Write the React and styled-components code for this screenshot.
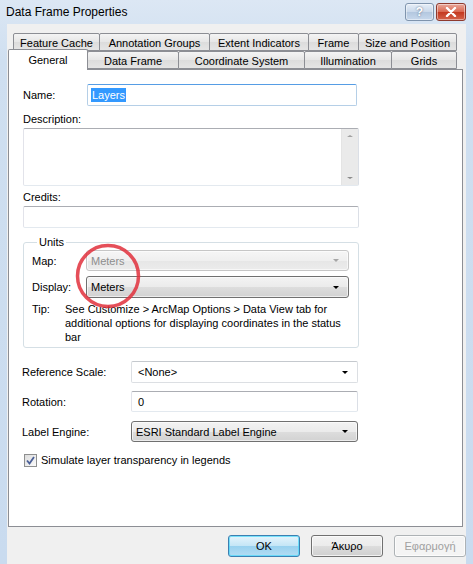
import React from 'react'
import styled, { createGlobalStyle } from 'styled-components'

const Global = createGlobalStyle`
  html, body { margin: 0; padding: 0; overflow: hidden; }
  body { font-family: "Liberation Sans", Arial, sans-serif; font-size: 11px; color: #000; }
`

const topTabs = [
  { label: 'Feature Cache', w: 87 },
  { label: 'Annotation Groups', w: 111 },
  { label: 'Extent Indicators', w: 100 },
  { label: 'Frame', w: 51 },
  { label: 'Size and Position', w: 99 },
]

const bottomTabs = [
  { label: 'General', w: 80, active: true },
  { label: 'Data Frame', w: 92 },
  { label: 'Coordinate System', w: 127 },
  { label: 'Illumination', w: 88 },
  { label: 'Grids', w: 66 },
]

const Window = styled.div`
  width: 473px;
  height: 564px;
  display: flex;
  flex-direction: column;
  background: linear-gradient(#dce7f4, #cfdff0 60px, #c9dbef);
`

const TitleBar = styled.div`
  height: 24px;
  flex: none;
  display: flex;
  align-items: center;
  justify-content: space-between;
  padding: 0 7px 0 6px;
  font-family: "Liberation Sans", Arial, sans-serif;
  font-size: 12px;
  color: #000;
`

const Caption = styled.span`
  margin-top: -1px;
`

const CaptionButtons = styled.div`
  display: flex;
  gap: 2px;
  align-self: flex-start;
  margin-top: 3px;
`

const CapBtn = styled.div`
  width: ${p => p.$w}px;
  height: 18px;
  box-sizing: border-box;
  border: 1px solid ${p => (p.$close ? '#8e3a2e' : '#7f94ad')};
  border-radius: 3px;
  display: flex;
  align-items: center;
  justify-content: center;
  color: #fff;
  font-weight: bold;
  font-size: 12px;
  text-shadow: 0 0 2px #50607a;
  background: ${p =>
    p.$close
      ? 'linear-gradient(#e9a99c, #d9664f 50%, #c4381f 51%, #d4634b)'
      : 'linear-gradient(#e6eef8, #c9d8ea 50%, #b3c7df 51%, #c7d8ec)'};
  box-shadow: inset 0 0 0 1px rgba(255,255,255,0.45);
`

const Body = styled.div`
  flex: 1;
  margin: 0 7px;
  background: #f0f0f0;
  padding-top: 9px;
  display: flex;
  flex-direction: column;
`

const TabRow = styled.div`
  display: flex;
  height: 18px;
  padding-left: ${p => p.$indent}px;
  position: relative;
  z-index: ${p => p.$z};
`

const Tab = styled.div`
  width: ${p => p.$w}px;
  box-sizing: border-box;
  height: ${p => (p.$active ? 21 : 18)}px;
  margin-top: ${p => (p.$active ? -2 : 0)}px;
  border: 1px solid #8c8e94;
  border-bottom: ${p => (p.$active ? 'none' : '1px solid #8c8e94')};
  margin-left: -1px;
  border-radius: 2px 2px 0 0;
  background: ${p => (p.$active ? '#fff' : 'linear-gradient(#f4f4f4, #e6e6e6 50%, #dcdcdc 51%, #e5e5e5)')};
  display: flex;
  align-items: center;
  justify-content: center;
  padding-top: ${p => (p.$active ? 0 : 1)}px;
  font-size: 11px;
  color: #000;
  &:first-child { margin-left: 0; }
`

const Panel = styled.div`
  position: relative;
  margin-left: 1px;
  width: 455px;
  height: 458px;
  box-sizing: border-box;
  border: 1px solid #8c8e94;
  background: #fff;
  padding: 14px 0 0 14px;
  display: flex;
  flex-direction: column;
`

const Row = styled.div`
  display: flex;
  align-items: center;
  margin-top: ${p => p.$mt || 0}px;
`

const Label = styled.span`
  width: ${p => p.$w || 'auto'};
  flex: none;
  line-height: 14px;
  margin-left: ${p => p.$ml || 0}px;
`

const TextBox = styled.div`
  width: ${p => p.$w}px;
  height: ${p => p.$h}px;
  box-sizing: border-box;
  border: 1px solid ${p => (p.$focus ? '#7eb4ea' : '#abadb3')};
  border-top-color: ${p => (p.$focus ? '#569de5' : '#abadb3')};
  border-left-color: ${p => (p.$focus ? '#b5cfe7' : '#e2e3ea')};
  border-right-color: ${p => (p.$focus ? '#b5cfe7' : '#dbdfe6')};
  border-bottom-color: ${p => (p.$focus ? '#b5cfe7' : '#e3e9ef')};
  border-radius: 2px;
  background: #fff;
  display: flex;
  align-items: ${p => (p.$multi ? 'stretch' : 'center')};
  padding-left: ${p => (p.$multi ? 0 : p.$pl || 3)}px;
  margin-top: ${p => p.$mt || 0}px;
  position: relative;
`

const Selected = styled.span`
  background: #3399ff;
  color: #fff;
  padding: 0 1px;
  line-height: 14px;
`

const Scrollbar = styled.div`
  margin-left: auto;
  width: 16px;
  background: #eaeaea;
  border-left: 1px solid #e4e4e4;
  display: flex;
  flex-direction: column;
  justify-content: space-between;
  align-items: center;
  padding: 6px 0;
`

const Arrow = styled.span`
  width: 0;
  height: 0;
  border-left: ${p => p.$size || 4}px solid transparent;
  border-right: ${p => p.$size || 4}px solid transparent;
  ${p => (p.$up ? 'border-bottom' : 'border-top')}: ${p => (p.$size || 4) - 0.5}px solid ${p => p.$color || '#000'};
`

const Group = styled.fieldset`
  margin: 7px 0 0 0;
  width: 336px;
  box-sizing: border-box;
  border: 1px solid #d5dfe5;
  border-radius: 3px;
  padding: 0 9px 3px 8px;
  display: flex;
  flex-direction: column;
  min-width: 0;
`

const Legend = styled.legend`
  padding: 0 2px;
  margin-left: 5px;
  line-height: 14px;
`

const Combo = styled.div`
  width: ${p => p.$w}px;
  height: ${p => p.$h || 21}px;
  box-sizing: border-box;
  border: 1px solid ${p => (p.$disabled ? '#c6c6c6' : '#707070')};
  border-radius: 3px;
  background: ${p =>
    p.$disabled
      ? 'linear-gradient(#f6f6f6, #efefef 50%, #e6e6e6 51%, #ececec)'
      : 'linear-gradient(#f3f3f3, #ebebeb 50%, #dddddd 51%, #d2d2d2)'};
  color: ${p => (p.$disabled ? '#8d8d8d' : '#000')};
  display: flex;
  align-items: center;
  padding: 0 9px 0 4px;
  margin-top: ${p => p.$mt || 0}px;
  box-shadow: inset 0 0 0 1px rgba(255,255,255,0.6);
`

const EditCombo = styled.div`
  width: ${p => p.$w}px;
  height: 22px;
  box-sizing: border-box;
  border: 1px solid #dcdfe3;
  border-top-color: #c5c9ce;
  border-radius: 2px;
  background: #fff;
  display: flex;
  align-items: center;
  padding: 0 9px 0 6px;
`

const Grow = styled.span`
  flex: 1;
`

const Tip = styled.div`
  display: flex;
  margin-top: 4px;
  line-height: 14px;
`

const TipText = styled.div`
  width: 282px;
`

const Check = styled.span`
  width: 13px;
  height: 13px;
  box-sizing: border-box;
  border: 1px solid #8e8f8f;
  background: linear-gradient(135deg, #dcdcdc, #fbfbfb);
  display: flex;
  align-items: center;
  justify-content: center;
  margin: 0 4px 0 1px;
`

const Highlight = styled.svg`
  position: absolute;
  left: 66px;
  top: 173px;
  pointer-events: none;
`

const Buttons = styled.div`
  display: flex;
  justify-content: flex-end;
  gap: 11px;
  margin-top: 8px;
`

const Button = styled.div`
  width: 72px;
  height: 22px;
  box-sizing: border-box;
  border: 1px solid ${p => (p.$default ? '#3c7fb1' : p.$disabled ? '#adb2b5' : '#707070')};
  border-radius: 3px;
  display: flex;
  align-items: center;
  justify-content: center;
  color: ${p => (p.$disabled ? '#a0a0a0' : '#000')};
  background: ${p =>
    p.$default
      ? 'linear-gradient(#e5f4fc, #c4e5f6 50%, #98d1ef 51%, #b3dcf3)'
      : p.$disabled
      ? '#f4f4f4'
      : 'linear-gradient(#f2f2f2, #ebebeb 50%, #dddddd 51%, #cfcfcf)'};
  box-shadow: inset 0 0 0 1px ${p => (p.$default ? 'rgba(72,216,251,0.7)' : 'rgba(255,255,255,0.7)')};
`

export default function App() {
  return (
    <>
      <Global />
      <Window>
        <TitleBar>
          <Caption>Data Frame Properties</Caption>
          <CaptionButtons>
            <CapBtn $w={29}>?</CapBtn>
            <CapBtn $w={30} $close>
              <svg width="12" height="10" viewBox="0 0 12 10">
                <path d="M2 1 L10 9 M10 1 L2 9" stroke="#fff" strokeWidth="2.4" strokeLinecap="round" />
              </svg>
            </CapBtn>
          </CaptionButtons>
        </TitleBar>
        <Body>
          <TabRow $indent={6} $z={1}>
            {topTabs.map(t => (
              <Tab key={t.label} $w={t.w}>{t.label}</Tab>
            ))}
          </TabRow>
          <TabRow $indent={1} $z={3}>
            {bottomTabs.map(t => (
              <Tab key={t.label} $w={t.w} $active={t.active}>{t.label}</Tab>
            ))}
          </TabRow>
          <Panel>
            <Row>
              <Label $w="64px">Name:</Label>
              <TextBox $w={270} $h={22} $focus>
                <Selected>Layers</Selected>
              </TextBox>
            </Row>
            <Row $mt={6}>
              <Label>Description:</Label>
            </Row>
            <TextBox $w={336} $h={58} $mt={2} $multi>
              <Scrollbar>
                <Arrow $up $size={3} $color="#a0a0a0" />
                <Arrow $size={3} $color="#8a8a8a" />
              </Scrollbar>
            </TextBox>
            <Row $mt={4}>
              <Label>Credits:</Label>
            </Row>
            <TextBox $w={336} $h={22} $mt={2} />
            <Group>
              <Legend>Units</Legend>
              <Row $mt={1}>
                <Label $w="54px">Map:</Label>
                <Combo $w={263} $disabled>
                  <Grow>Meters</Grow>
                  <Arrow $size={3.5} $color="#a6a6a6" />
                </Combo>
              </Row>
              <Row $mt={5}>
                <Label $w="54px">Display:</Label>
                <Combo $w={263} $h={22}>
                  <Grow>Meters</Grow>
                  <Arrow $size={3.5} />
                </Combo>
              </Row>
              <Tip>
                <Label $w="33px">Tip:</Label>
                <TipText>
                  See Customize &gt; ArcMap Options &gt; Data View tab for additional options for displaying
                  coordinates in the status bar
                </TipText>
              </Tip>
            </Group>
            <Row $mt={13}>
              <Label $w="109px" $ml={-1}>Reference Scale:</Label>
              <EditCombo $w={227}>
                <Grow>&lt;None&gt;</Grow>
                <Arrow $size={3.5} />
              </EditCombo>
            </Row>
            <Row $mt={8}>
              <Label $w="109px" $ml={-1}>Rotation:</Label>
              <TextBox $w={227} $h={21} $pl={6}>0</TextBox>
            </Row>
            <Row $mt={9}>
              <Label $w="109px" $ml={-1}>Label Engine:</Label>
              <Combo $w={227}>
                <Grow>ESRI Standard Label Engine</Grow>
                <Arrow $size={3.5} />
              </Combo>
            </Row>
            <Row $mt={11}>
              <Check>
                <svg width="9" height="9" viewBox="0 0 9 9">
                  <path d="M1 4.5 L3.5 7.5 L8 1" fill="none" stroke="#4a5f97" strokeWidth="1.8" />
                </svg>
              </Check>
              <Label>Simulate layer transparency in legends</Label>
            </Row>
            <Highlight width="66" height="66" viewBox="0 0 66 66">
              <ellipse cx="33" cy="33" rx="30.5" ry="30.5" fill="none" stroke="#e0303c" strokeOpacity="0.85" strokeWidth="3.5" />
            </Highlight>
          </Panel>
          <Buttons>
            <Button $default>OK</Button>
            <Button>Άκυρο</Button>
            <Button $disabled>Εφαρμογή</Button>
          </Buttons>
        </Body>
      </Window>
    </>
  )
}
